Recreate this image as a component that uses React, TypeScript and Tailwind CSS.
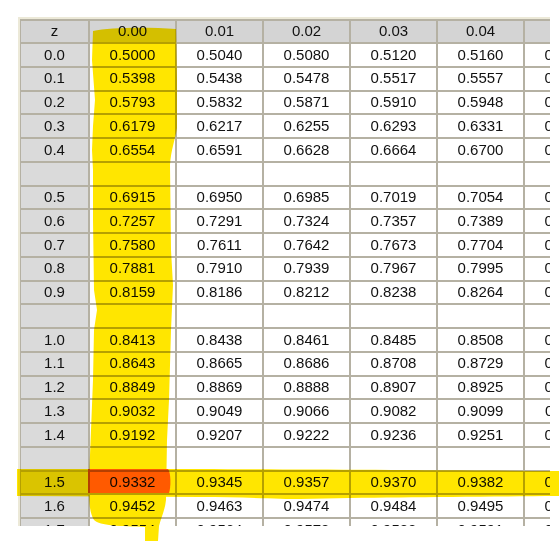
import React from "react";

const cols = ["0.00", "0.01", "0.02", "0.03", "0.04", "0.05"];

type Row = { z: string; v: string[] } | null;

const rows: Row[] = [
  { z: "0.0", v: ["0.5000", "0.5040", "0.5080", "0.5120", "0.5160", "0.5199"] },
  { z: "0.1", v: ["0.5398", "0.5438", "0.5478", "0.5517", "0.5557", "0.5596"] },
  { z: "0.2", v: ["0.5793", "0.5832", "0.5871", "0.5910", "0.5948", "0.5987"] },
  { z: "0.3", v: ["0.6179", "0.6217", "0.6255", "0.6293", "0.6331", "0.6368"] },
  { z: "0.4", v: ["0.6554", "0.6591", "0.6628", "0.6664", "0.6700", "0.6736"] },
  null,
  { z: "0.5", v: ["0.6915", "0.6950", "0.6985", "0.7019", "0.7054", "0.7088"] },
  { z: "0.6", v: ["0.7257", "0.7291", "0.7324", "0.7357", "0.7389", "0.7422"] },
  { z: "0.7", v: ["0.7580", "0.7611", "0.7642", "0.7673", "0.7704", "0.7734"] },
  { z: "0.8", v: ["0.7881", "0.7910", "0.7939", "0.7967", "0.7995", "0.8023"] },
  { z: "0.9", v: ["0.8159", "0.8186", "0.8212", "0.8238", "0.8264", "0.8289"] },
  null,
  { z: "1.0", v: ["0.8413", "0.8438", "0.8461", "0.8485", "0.8508", "0.8531"] },
  { z: "1.1", v: ["0.8643", "0.8665", "0.8686", "0.8708", "0.8729", "0.8749"] },
  { z: "1.2", v: ["0.8849", "0.8869", "0.8888", "0.8907", "0.8925", "0.8944"] },
  { z: "1.3", v: ["0.9032", "0.9049", "0.9066", "0.9082", "0.9099", "0.9115"] },
  { z: "1.4", v: ["0.9192", "0.9207", "0.9222", "0.9236", "0.9251", "0.9265"] },
  null,
  { z: "1.5", v: ["0.9332", "0.9345", "0.9357", "0.9370", "0.9382", "0.9394"] },
  { z: "1.6", v: ["0.9452", "0.9463", "0.9474", "0.9484", "0.9495", "0.9505"] },
  { z: "1.7", v: ["0.9554", "0.9564", "0.9573", "0.9582", "0.9591", "0.9599"] },
];

export default function App() {
  return (
    <div
      className="relative w-[559px] h-[541px] bg-white overflow-hidden pl-[18px] pt-[17px]"
      style={{ fontFamily: '"Liberation Sans", Arial, sans-serif' }}
    >
      <div className="w-[532px] h-[509px] overflow-hidden bg-[#ece9d8] pt-[2px] pl-[2px]">
        <div className="w-[700px] h-[600px] bg-[#b5b1a3] pt-[2px] pl-[1px]">
          <div className="grid grid-cols-[67px_repeat(6,85px)] gap-x-[2px] gap-y-[2px] text-[15px] text-[#111]">
            <div className="h-[21px] bg-[#d4d4d4] flex items-center justify-center">z</div>
            {cols.map((c) => (
              <div key={c} className="h-[21px] bg-[#d4d4d4] flex items-center justify-center">
                {c}
              </div>
            ))}
            {rows.map((r, i) => (
              <React.Fragment key={i}>
                <div className="h-[21.75px] bg-[#dadada] flex items-center justify-center">
                  {r ? r.z : ""}
                </div>
                {cols.map((c, j) => (
                  <div
                    key={c}
                    className="h-[21.75px] bg-white flex items-center justify-center"
                  >
                    {r ? r.v[j] : ""}
                  </div>
                ))}
              </React.Fragment>
            ))}
          </div>
        </div>
      </div>

      <svg
        className="absolute left-0 top-0 pointer-events-none mix-blend-multiply"
        width="559"
        height="541"
        viewBox="0 0 559 541"
      >
        <path
          fill="#ffe600"
          d="M93 31 C 110 27, 150 27, 176 29 L 177 80 L 177 128 C 175 140, 171 150, 170 165 L 171 250 L 173 285 L 171 330 L 169 400 L 167 440 L 166 500 C 165 510, 161 518, 159 526 L 158 541 L 145 541 L 145 527 C 120 526, 100 526, 94 520 C 89 512, 89 500, 89 480 L 91 430 L 93 380 L 94 330 L 97 310 L 94 290 L 93 220 L 93 170 L 92 150 L 93 126 L 95 100 L 92 60 Z"
        />
        <path
          fill="#ffe600"
          d="M17 469 L 150 469 C 250 469, 400 470, 559 471 L 559 496 C 450 497, 380 497, 300 499 C 280 499, 240 497, 200 497 L 17 496 Z"
        />
        <path
          fill="#ff5a00"
          d="M88 469 L 168 469 C 171 472, 171 488, 169 493 L 88 493 Z"
        />
      </svg>
    </div>
  );
}
